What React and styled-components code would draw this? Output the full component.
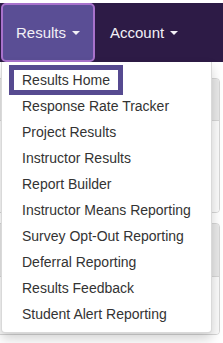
import React from "react";
import styled, { createGlobalStyle } from "styled-components";

const Global = createGlobalStyle`
  html, body { margin: 0; padding: 0; background: #fff; }
  body { font-family: "Liberation Sans", Arial, sans-serif; }
`;

const Page = styled.div`
  position: relative;
  width: 223px;
  height: 343px;
  overflow: hidden;
  background: #fff;
`;

const NavBar = styled.nav`
  margin-top: 3px;
  height: 59px;
  background: #2d1b46;
  display: flex;
  align-items: stretch;
`;

const NavItem = styled.div`
  display: flex;
  align-items: center;
  box-sizing: border-box;
  font-size: 15px;
  color: #f2f0f6;
  padding: ${(p) => (p.$active ? "0 13px" : "0 15px")};
  margin-left: ${(p) => (p.$active ? "1px" : "0")};
  width: ${(p) => (p.$active ? "94px" : "auto")};
  background: ${(p) => (p.$active ? "#5a4e95" : "transparent")};
  border: ${(p) => (p.$active ? "2px solid #a872cc" : "none")};
  border-radius: 5px;
  padding-bottom: 1px;
`;

const Caret = styled.span`
  display: inline-block;
  width: 0;
  height: 0;
  margin-left: 6px;
  margin-top: 2px;
  border-top: 4px solid currentColor;
  border-left: 4px solid transparent;
  border-right: 4px solid transparent;
`;

const Content = styled.div`
  padding: 16px 3px 0 0;
  display: flex;
  flex-direction: column;
  gap: 10px;
`;

const Panel = styled.div`
  margin-left: -6px;
  border: 1px solid #d6d6d6;
  border-radius: 4px;
  background: #fafafa;
  overflow: hidden;
`;

const PanelHeading = styled.div`
  height: ${(p) => p.$h}px;
  background: #e8e8e8;
  border-bottom: 1px solid #d6d6d6;
`;

const PanelBody = styled.div`
  height: ${(p) => p.$h}px;
  background: #fafafa;
`;

const Footer = styled.div`
  height: 20px;
  margin-left: -6px;
  border-top: 1px solid #dcdcdc;
  background: #f0f0f0;
`;

const Menu = styled.ul`
  position: absolute;
  top: 62px;
  left: 1px;
  width: 211px;
  box-sizing: border-box;
  margin: 0;
  padding: 5px 0;
  list-style: none;
  background: #fff;
  border: 1px solid rgba(0, 0, 0, 0.15);
  border-top: none;
  border-radius: 0 0 4px 4px;
  box-shadow: 0 6px 12px rgba(0, 0, 0, 0.175);
`;

const MenuItem = styled.li`
  padding: 3px 20px;
  line-height: 20px;
  font-size: 14px;
  color: #333;
  white-space: nowrap;
`;

const Focus = styled.span`
  display: inline-block;
  padding: 0 8px;
  margin: 0 -8px;
  outline: 5px solid #564a90;
`;

const items = [
  "Results Home",
  "Response Rate Tracker",
  "Project Results",
  "Instructor Results",
  "Report Builder",
  "Instructor Means Reporting",
  "Survey Opt-Out Reporting",
  "Deferral Reporting",
  "Results Feedback",
  "Student Alert Reporting",
];

export default function App() {
  return (
    <Page>
      <Global />
      <NavBar>
        <NavItem $active>
          Results<Caret />
        </NavItem>
        <NavItem>
          Account<Caret />
        </NavItem>
      </NavBar>
      <Content>
        <Panel>
          <PanelHeading $h={41} />
          <PanelBody $h={91} />
        </Panel>
        <Panel>
          <PanelHeading $h={52} />
          <PanelBody $h={57} />
        </Panel>
        <Footer />
      </Content>
      <Menu>
        {items.map((t, i) => (
          <MenuItem key={t}>{i === 0 ? <Focus>{t}</Focus> : t}</MenuItem>
        ))}
      </Menu>
    </Page>
  );
}
